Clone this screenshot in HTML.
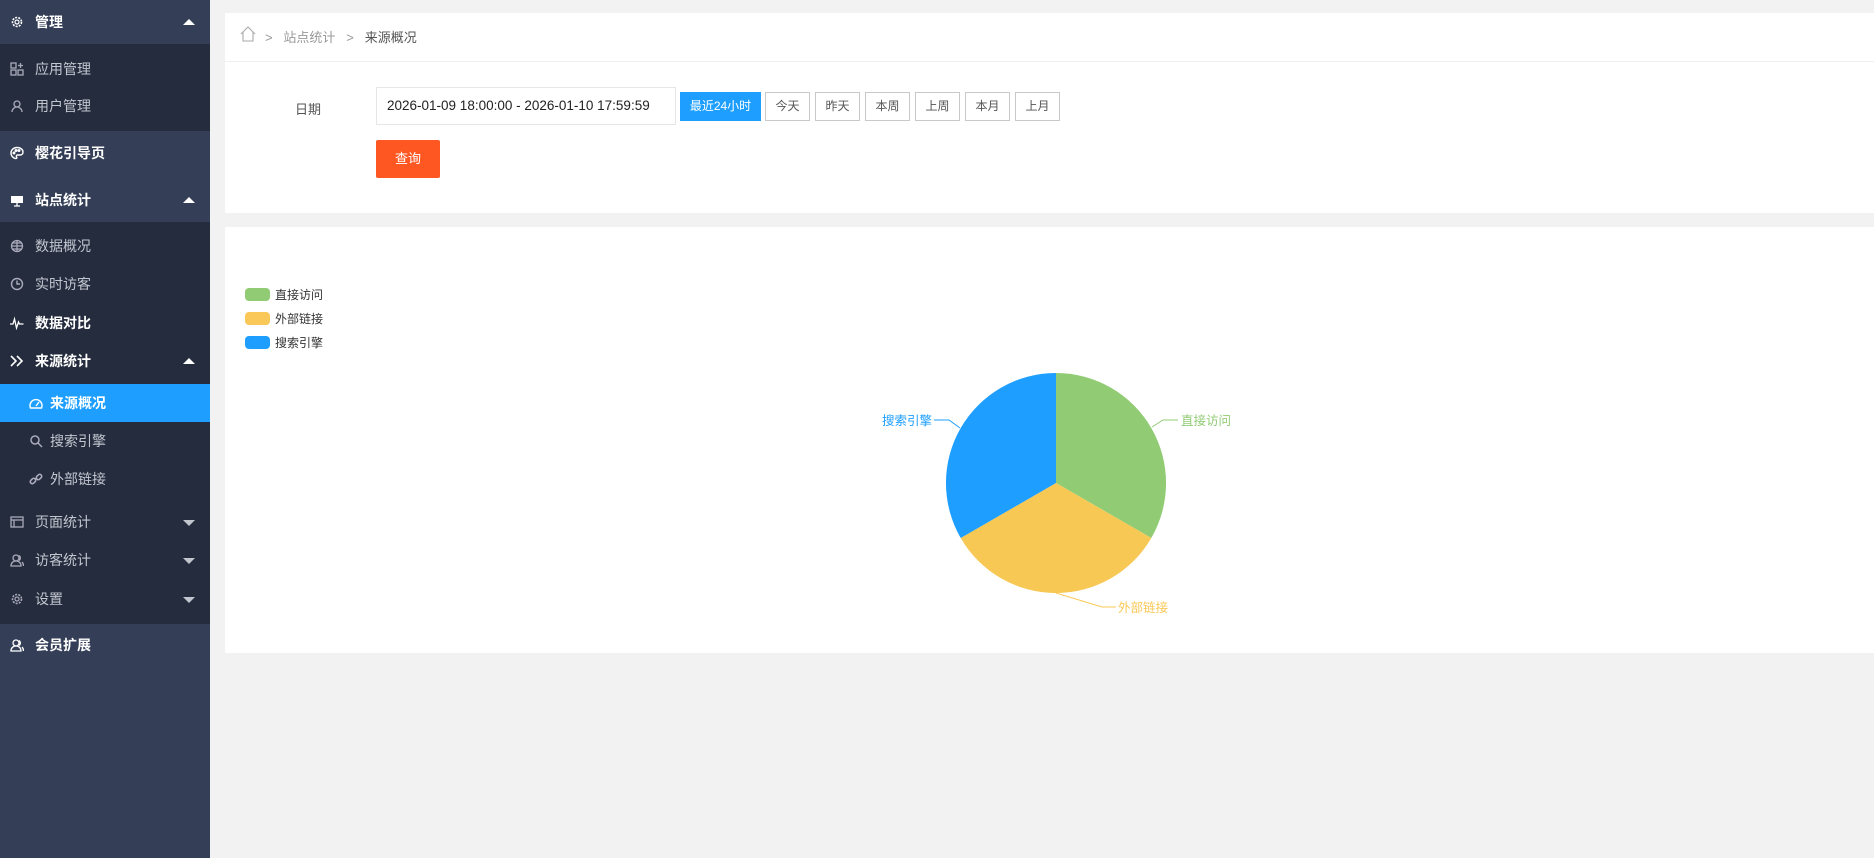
<!DOCTYPE html>
<html><head><meta charset="utf-8"><style>
*{margin:0;padding:0;box-sizing:border-box}
body{width:1874px;height:858px;background:#f2f2f2;font-family:"Liberation Sans","Noto Sans CJK SC",sans-serif;position:relative;overflow:hidden}
.sb{position:absolute;left:0;top:0;width:210px;height:858px;background:#343f57}
.dark{position:absolute;left:0;width:210px;background:#242c3e}
.it{position:absolute;left:0;width:210px;height:38px;line-height:38px;font-size:14px;color:#fff}
.it .t{position:absolute;left:35px}
.it.sub .t{color:#c2c6cf}
.it.sub3 .t{left:50px;color:#c2c6cf}
.ic{position:absolute;left:10px;top:12px;width:14px;height:14px}
.sub3 .ic{left:29px}
.up,.dn{position:absolute;right:15px;top:16px;width:0;height:0;border-left:6px solid transparent;border-right:6px solid transparent}
.up{border-bottom:6px solid #fff}
.dn{border-top:6px solid #c2c6cf;top:17px}
.card{position:absolute;left:225px;right:0;background:#fff}
.btn{position:absolute;top:92px;height:29px;width:45px;border:1px solid #c9c9c9;background:#fff;font-size:12px;color:#555;text-align:center;line-height:27px}
</style></head><body>
<div class="sb">
 <div class="dark" style="top:44px;height:87px"></div>
 <div class="dark" style="top:222px;height:402px"></div>
 <div class="it" style="top:3px"><svg class="ic" viewBox="0 0 14 14"><circle cx="7" cy="7" r="4.5" fill="none" stroke="#fff" stroke-width="1.6" stroke-dasharray="2 1.2"/><circle cx="7" cy="7" r="2" fill="none" stroke="#fff" stroke-width="1.2"/></svg><span class="t" style="font-weight:bold">管理</span><i class="up"></i></div>
 <div class="it sub" style="top:50px"><svg class="ic" viewBox="0 0 14 14" fill="none" stroke="#aab" stroke-width="1.3"><rect x="1" y="1" width="5" height="5"/><rect x="1" y="8" width="5" height="5"/><rect x="8" y="8" width="5" height="5"/><path d="M10.5 1v5M8 3.5h5"/></svg><span class="t">应用管理</span></div>
 <div class="it sub" style="top:87px"><svg class="ic" viewBox="0 0 14 14" fill="none" stroke="#aab" stroke-width="1.3"><circle cx="7" cy="5" r="3"/><path d="M2 13c0-3 2.5-5 5-5s5 2 5 5"/></svg><span class="t">用户管理</span></div>
 <div class="it" style="top:134px"><svg class="ic" viewBox="0 0 14 14" fill="none" stroke="#fff" stroke-width="1.4"><path d="M7 1.5C3.5 1.5 1 4 1 7s2.5 5.5 5 5.5c1 0 1-1 .5-1.7-.5-.8 0-1.8 1-1.8H10c2 0 3-1.3 3-3C13 3.5 10.5 1.5 7 1.5z"/><circle cx="4" cy="7" r=".8"/><circle cx="6" cy="4.5" r=".8"/><circle cx="9" cy="4.5" r=".8"/></svg><span class="t" style="font-weight:bold">樱花引导页</span></div>
 <div class="it" style="top:181px"><svg class="ic" viewBox="0 0 14 14"><rect x="1" y="3" width="12" height="7" fill="#fff"/><path d="M7 10v3M4 13h6" stroke="#fff" stroke-width="1.3"/></svg><span class="t" style="font-weight:bold">站点统计</span><i class="up"></i></div>
 <div class="it sub" style="top:227px"><svg class="ic" viewBox="0 0 14 14" fill="none" stroke="#aab" stroke-width="1.3"><circle cx="7" cy="7" r="5.5"/><path d="M1.5 7h11M7 1.5v11M3 4h8M3 10h8"/></svg><span class="t">数据概况</span></div>
 <div class="it sub" style="top:265px"><svg class="ic" viewBox="0 0 14 14" fill="none" stroke="#aab" stroke-width="1.4"><circle cx="7" cy="7" r="5.5"/><path d="M7 3.5V7h3"/></svg><span class="t">实时访客</span></div>
 <div class="it" style="top:304px"><svg class="ic" viewBox="0 0 14 14" fill="none" stroke="#fff" stroke-width="1.3"><path d="M0 8h3l1.5-5 2 9 2-6 1 2h4"/></svg><span class="t" style="font-weight:bold">数据对比</span></div>
 <div class="it" style="top:342px"><svg class="ic" viewBox="0 0 14 14" fill="none" stroke="#fff" stroke-width="1.6"><path d="M1 2l5 5-5 5M7 2l5 5-5 5"/></svg><span class="t" style="font-weight:bold">来源统计</span><i class="up"></i></div>
 <div class="it sub3" style="top:384px;background:#1e9fff"><svg class="ic" viewBox="0 0 14 14" fill="none" stroke="#fff" stroke-width="1.4"><path d="M1.5 12A6 6 0 1 1 12.5 12Z"/><path d="M7 10l3-4"/></svg><span class="t" style="color:#fff;font-weight:bold">来源概况</span></div>
 <div class="it sub3" style="top:422px"><svg class="ic" viewBox="0 0 14 14" fill="none" stroke="#aab" stroke-width="1.5"><circle cx="6" cy="6" r="4"/><path d="M9 9l4 4"/></svg><span class="t">搜索引擎</span></div>
 <div class="it sub3" style="top:460px"><svg class="ic" viewBox="0 0 14 14" fill="none" stroke="#aab" stroke-width="1.6"><path d="M6 8l2-2"/><rect x="1" y="7" width="6" height="4" rx="2" transform="rotate(-45 4 9)"/><rect x="7" y="3" width="6" height="4" rx="2" transform="rotate(-45 10 5)"/></svg><span class="t">外部链接</span></div>
 <div class="it sub" style="top:503px"><svg class="ic" viewBox="0 0 14 14" fill="none" stroke="#aab" stroke-width="1.3"><rect x="1" y="2" width="12" height="10"/><path d="M1 5h12M4 5v7"/></svg><span class="t">页面统计</span><i class="dn"></i></div>
 <div class="it sub" style="top:541px"><svg class="ic" viewBox="0 0 14 14" fill="none" stroke="#aab" stroke-width="1.3"><circle cx="6" cy="5" r="3"/><path d="M1 13c0-3 2-5 5-5s5 2 5 5zM9 2.5a3 3 0 0 1 0 5M12 9c1 1 1.5 2 1.5 4"/></svg><span class="t">访客统计</span><i class="dn"></i></div>
 <div class="it sub" style="top:580px"><svg class="ic" viewBox="0 0 14 14"><circle cx="7" cy="7" r="4.5" fill="none" stroke="#aab" stroke-width="1.6" stroke-dasharray="2 1.2"/><circle cx="7" cy="7" r="2" fill="none" stroke="#aab" stroke-width="1.2"/></svg><span class="t">设置</span><i class="dn"></i></div>
 <div class="it" style="top:626px"><svg class="ic" viewBox="0 0 14 14" fill="none" stroke="#fff" stroke-width="1.3"><circle cx="6" cy="5" r="3"/><path d="M1 13c0-3 2-5 5-5s5 2 5 5zM9 2.5a3 3 0 0 1 0 5M12 9c1 1 1.5 2 1.5 4"/></svg><span class="t" style="font-weight:bold">会员扩展</span></div>
</div>

<div class="card" style="top:13px;height:200px">
 <div style="position:absolute;left:0;right:0;top:48px;border-top:1px solid #f0f0f0"></div>
 <svg style="position:absolute;left:15px;top:13px" width="16" height="16" viewBox="0 0 16 16" fill="none" stroke="#aaa" stroke-width="1.1"><path d="M1 8L8 1l7 7M3 6v9h10V6"/></svg>
 <div style="position:absolute;left:40px;top:14px;font-size:13px;color:#999;white-space:pre">&gt;   站点统计   &gt;   <span style="color:#555">来源概况</span></div>
 <div style="position:absolute;left:70px;top:86px;font-size:13px;color:#555">日期</div>
 <div style="position:absolute;left:151px;top:74px;width:300px;height:38px;border:1px solid #e6e6e6;font-size:13.5px;color:#222;line-height:36px;padding-left:10px">2026-01-09 18:00:00 - 2026-01-10 17:59:59</div>
 <div class="btn" style="left:455px;top:79px;width:81px;background:#1e9fff;border-color:#1e9fff;color:#fff">最近24小时</div>
 <div class="btn" style="left:540px;top:79px">今天</div>
 <div class="btn" style="left:590px;top:79px">昨天</div>
 <div class="btn" style="left:640px;top:79px">本周</div>
 <div class="btn" style="left:690px;top:79px">上周</div>
 <div class="btn" style="left:740px;top:79px">本月</div>
 <div class="btn" style="left:790px;top:79px">上月</div>
 <div style="position:absolute;left:151px;top:127px;width:64px;height:38px;background:#ff5722;border-radius:2px;color:#fff;font-size:13px;text-align:center;line-height:38px">查询</div>
</div>

<div class="card" style="top:227px;height:426px"></div>
<svg style="position:absolute;left:0;top:0" width="1874" height="858">
 <g font-family="Liberation Sans,Noto Sans CJK SC,sans-serif" font-size="12" fill="#333">
  <rect x="245" y="288" width="25" height="13" rx="4" fill="#91cc75"/><text x="275" y="299">直接访问</text>
  <rect x="245" y="312" width="25" height="13" rx="4" fill="#fac858"/><text x="275" y="323">外部链接</text>
  <rect x="245" y="336" width="25" height="13" rx="4" fill="#1e9fff"/><text x="275" y="347">搜索引擎</text>
 </g>
 <path d="M1056 483L1056 373A110 110 0 0 1 1151.3 538Z" fill="#91cc75"/>
 <path d="M1056 483L1151.3 538A110 110 0 0 1 960.7 538Z" fill="#f8c855"/>
 <path d="M1056 483L960.7 538A110 110 0 0 1 1056 373Z" fill="#1e9fff"/>
 <polyline points="1152,427 1163,420 1178,420" fill="none" stroke="#91cc75"/>
 <polyline points="1056,593 1102,607 1116,607" fill="none" stroke="#fac858"/>
 <polyline points="960,428 949,420 934,420" fill="none" stroke="#1e9fff"/>
 <g font-family="Liberation Sans,Noto Sans CJK SC,sans-serif" font-size="12.5">
  <text x="1181" y="425" fill="#91cc75">直接访问</text>
  <text x="1118" y="612" fill="#fac858">外部链接</text>
  <text x="932" y="425" fill="#1e9fff" text-anchor="end">搜索引擎</text>
 </g>
</svg>
</body></html>
